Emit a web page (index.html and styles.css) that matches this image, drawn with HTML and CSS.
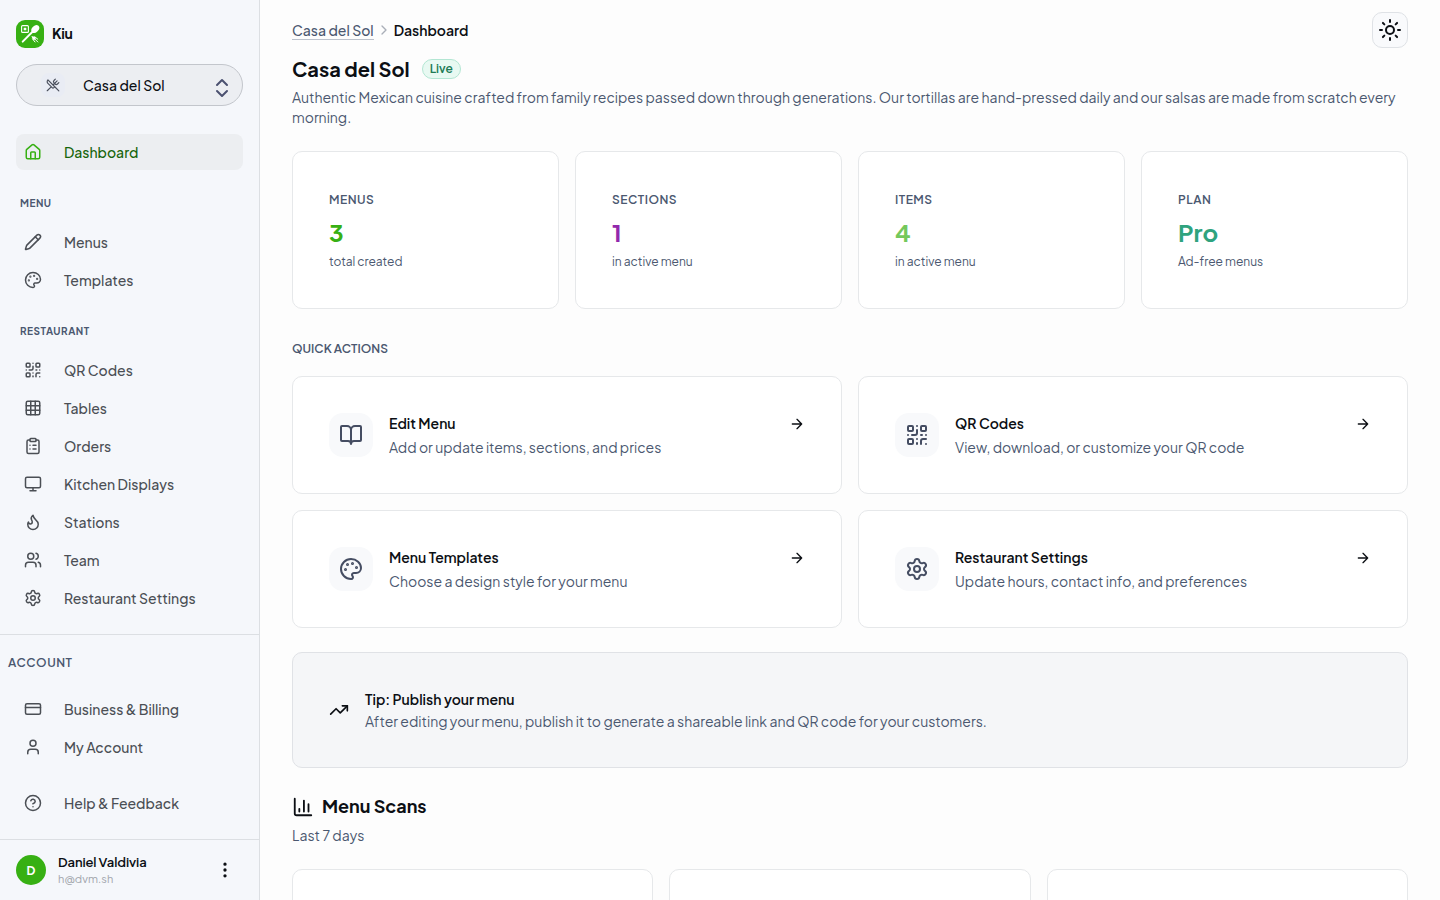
FILE: index.html
```
<!DOCTYPE html>
<html lang="en">
<head>
  <meta charset="UTF-8" />
  <meta name="viewport" content="width=device-width, initial-scale=1.0"/>
  <title>Dashboard - Kiu</title>
  <link rel="stylesheet" href="styles.css">
</head>
<body>
  <!-- Icon sprite -->
  <svg class="sprite" aria-hidden="true">
    <symbol id="i-home" viewBox="0 0 24 24"><path d="M15 21v-8a1 1 0 0 0-1-1h-4a1 1 0 0 0-1 1v8"/><path d="M3 10a2 2 0 0 1 .709-1.528l7-6a2 2 0 0 1 2.582 0l7 6A2 2 0 0 1 21 10v9a2 2 0 0 1-2 2H5a2 2 0 0 1-2-2z"/></symbol>
    <symbol id="i-pencil" viewBox="0 0 24 24"><path d="M21.174 6.812a1 1 0 0 0-3.986-3.987L3.842 16.174a2 2 0 0 0-.5.83l-1.321 4.352a.5.5 0 0 0 .623.622l4.353-1.32a2 2 0 0 0 .83-.497z"/><path d="m15 5 4 4"/></symbol>
    <symbol id="i-palette" viewBox="0 0 24 24"><path d="M12 22a1 1 0 0 1 0-20 10 9 0 0 1 10 9 5 5 0 0 1-5 5h-2.25a1.75 1.75 0 0 0-1.4 2.8l.3.4a1.75 1.75 0 0 1-1.4 2.8z"/><g fill="currentColor"><circle cx="13.5" cy="6.5" r=".5"/><circle cx="17.5" cy="10.5" r=".5"/><circle cx="6.5" cy="12.5" r=".5"/><circle cx="8.5" cy="7.5" r=".5"/></g></symbol>
    <symbol id="i-qr" viewBox="0 0 24 24"><rect width="5" height="5" x="3" y="3" rx="1"/><rect width="5" height="5" x="16" y="3" rx="1"/><rect width="5" height="5" x="3" y="16" rx="1"/><path d="M21 16h-3a2 2 0 0 0-2 2v3M21 21v.01M12 7v3a2 2 0 0 1-2 2H7M3 12h.01M12 3h.01M12 16v.01M16 12h1M21 12v.01M12 21v-1"/></symbol>
    <symbol id="i-grid" viewBox="0 0 24 24"><rect width="18" height="18" x="3" y="3" rx="2"/><path d="M3 9h18M3 15h18M9 3v18M15 3v18"/></symbol>
    <symbol id="i-clipboard" viewBox="0 0 24 24"><rect width="8" height="4" x="8" y="2" rx="1"/><path d="M16 4h2a2 2 0 0 1 2 2v14a2 2 0 0 1-2 2H6a2 2 0 0 1-2-2V6a2 2 0 0 1 2-2h2M12 11h4M12 16h4M8 11h.01M8 16h.01"/></symbol>
    <symbol id="i-monitor" viewBox="0 0 24 24"><rect width="20" height="14" x="2" y="3" rx="2"/><path d="M8 21h8M12 17v4"/></symbol>
    <symbol id="i-flame" viewBox="0 0 24 24"><path d="M8.5 14.5A2.5 2.5 0 0 0 11 12c0-1.38-.5-2-1-3-1.072-2.143-.224-4.054 2-6 .5 2.5 2 4.9 4 6.5 2 1.6 3 3.5 3 5.5a7 7 0 1 1-14 0c0-1.153.433-2.294 1-3a2.5 2.5 0 0 0 2.5 2.5z"/></symbol>
    <symbol id="i-users" viewBox="0 0 24 24"><path d="M16 21v-2a4 4 0 0 0-4-4H6a4 4 0 0 0-4 4v2"/><circle cx="9" cy="7" r="4"/><path d="M22 21v-2a4 4 0 0 0-3-3.87M16 3.13a4 4 0 0 1 0 7.75"/></symbol>
    <symbol id="i-settings" viewBox="0 0 24 24"><path d="M9.671 4.136a2.34 2.34 0 0 1 4.659 0 2.34 2.34 0 0 0 3.319 1.915 2.34 2.34 0 0 1 2.33 4.033 2.34 2.34 0 0 0 0 3.831 2.34 2.34 0 0 1-2.33 4.033 2.34 2.34 0 0 0-3.319 1.915 2.34 2.34 0 0 1-4.659 0 2.34 2.34 0 0 0-3.32-1.915 2.34 2.34 0 0 1-2.33-4.033 2.34 2.34 0 0 0 0-3.831A2.34 2.34 0 0 1 6.35 6.051a2.34 2.34 0 0 0 3.319-1.915"/><circle cx="12" cy="12" r="3"/></symbol>
    <symbol id="i-card" viewBox="0 0 24 24"><rect width="20" height="14" x="2" y="5" rx="2"/><path d="M2 10h20"/></symbol>
    <symbol id="i-user" viewBox="0 0 24 24"><path d="M19 21v-2a4 4 0 0 0-4-4H9a4 4 0 0 0-4 4v2"/><circle cx="12" cy="7" r="4"/></symbol>
    <symbol id="i-help" viewBox="0 0 24 24"><circle cx="12" cy="12" r="10"/><path d="M9.09 9a3 3 0 0 1 5.83 1c0 2-3 3-3 3M12 17h.01"/></symbol>
    <symbol id="i-utensils" viewBox="0 0 24 24"><path d="m16 2-2.3 2.3a3 3 0 0 0 0 4.2l1.8 1.8a3 3 0 0 0 4.2 0L22 8M15 15 3.3 3.3a4.2 4.2 0 0 0 0 6l7.3 7.3c.7.7 2 .7 2.8 0L15 15Zm0 0 7 7M2.1 21.8l6.4-6.3M19 5l-7 7"/></symbol>
    <symbol id="i-updown" viewBox="0 0 24 24"><path d="m7 15 5 5 5-5M7 9l5-5 5 5"/></symbol>
    <symbol id="i-dots" viewBox="0 0 24 24"><circle cx="12" cy="12" r="1"/><circle cx="12" cy="5" r="1"/><circle cx="12" cy="19" r="1"/></symbol>
    <symbol id="i-chevron" viewBox="0 0 24 24"><path d="m9 18 6-6-6-6"/></symbol>
    <symbol id="i-sun" viewBox="0 0 24 24"><circle cx="12" cy="12" r="4"/><path d="M12 2v2M12 20v2M4.93 4.93l1.41 1.41M17.66 17.66l1.41 1.41M2 12h2M20 12h2M6.34 17.66l-1.41 1.41M19.07 4.93l-1.41 1.41"/></symbol>
    <symbol id="i-book" viewBox="0 0 24 24"><path d="M12 7v14M3 18a1 1 0 0 1-1-1V4a1 1 0 0 1 1-1h5a4 4 0 0 1 4 4 4 4 0 0 1 4-4h5a1 1 0 0 1 1 1v13a1 1 0 0 1-1 1h-6a3 3 0 0 0-3 3 3 3 0 0 0-3-3z"/></symbol>
    <symbol id="i-arrow" viewBox="0 0 24 24"><path d="M5 12h14M12 5l7 7-7 7"/></symbol>
    <symbol id="i-trend" viewBox="0 0 24 24"><path d="M16 7h6v6"/><path d="m22 7-8.5 8.5-5-5L2 17"/></symbol>
    <symbol id="i-chart" viewBox="0 0 24 24"><path d="M3 3v16a2 2 0 0 0 2 2h16M18 17V9M13 17V5M8 17v-3"/></symbol>
  </svg>

  <aside class="sidebar">
    <div class="brand">
      <svg class="logo" viewBox="0 0 28 28">
        <rect width="28" height="28" rx="9" fill="#37b013"/>
        <rect x="5.6" y="5.6" width="6.8" height="6.8" rx="1" fill="none" stroke="#fff" stroke-width="1.1"/>
        <rect x="7.7" y="7.7" width="2.6" height="2.6" rx=".4" fill="#fff"/>
        <path d="M6.7 21.6 17.5 10.8" fill="none" stroke="#fff" stroke-width="2" stroke-linecap="round"/>
        <ellipse cx="19.3" cy="9" rx="3.2" ry="4.5" transform="rotate(45 19.3 9)" fill="#fff"/>
        <path d="m15.4 16 1.2 2.9c.6 1.2 1.9 1.2 2.6.5s.7-2-.5-2.6z" fill="#fff"/>
        <path d="m18.6 18.800 3.200 3.200M18.800 16.800l3 2.400M16.600 19l2.400 3" fill="none" stroke="#fff" stroke-width="1" stroke-linecap="round"/>
      </svg>
      <span>Kiu</span>
    </div>

    <button class="switcher">
      <span class="switcher-icon"><svg class="icon"><use href="#i-utensils"/></svg></span>
      <span class="switcher-name">Casa del Sol</span>
      <svg class="icon switcher-arrows"><use href="#i-updown"/></svg>
    </button>

    <nav class="nav">
      <a class="nav-link active" href="#"><svg class="icon"><use href="#i-home"/></svg>Dashboard</a>
      <h2 class="nav-title">MENU</h2>
      <a class="nav-link" href="#"><svg class="icon"><use href="#i-pencil"/></svg>Menus</a>
      <a class="nav-link" href="#"><svg class="icon"><use href="#i-palette"/></svg>Templates</a>
      <h2 class="nav-title">RESTAURANT</h2>
      <a class="nav-link" href="#"><svg class="icon"><use href="#i-qr"/></svg>QR Codes</a>
      <a class="nav-link" href="#"><svg class="icon"><use href="#i-grid"/></svg>Tables</a>
      <a class="nav-link" href="#"><svg class="icon"><use href="#i-clipboard"/></svg>Orders</a>
      <a class="nav-link" href="#"><svg class="icon"><use href="#i-monitor"/></svg>Kitchen Displays</a>
      <a class="nav-link" href="#"><svg class="icon"><use href="#i-flame"/></svg>Stations</a>
      <a class="nav-link" href="#"><svg class="icon"><use href="#i-users"/></svg>Team</a>
      <a class="nav-link" href="#"><svg class="icon"><use href="#i-settings"/></svg>Restaurant Settings</a>
    </nav>

    <div class="account">
      <h2 class="account-title">ACCOUNT</h2>
      <div class="nav">
        <a class="nav-link" href="#"><svg class="icon"><use href="#i-card"/></svg>Business &amp; Billing</a>
        <a class="nav-link" href="#"><svg class="icon"><use href="#i-user"/></svg>My Account</a>
        <a class="nav-link help" href="#"><svg class="icon"><use href="#i-help"/></svg>Help &amp; Feedback</a>
      </div>
    </div>

    <div class="user">
      <span class="avatar">D</span>
      <div class="user-info">
        <strong>Daniel Valdivia</strong>
        <small>h@dvm.sh</small>
      </div>
      <svg class="icon user-menu"><use href="#i-dots"/></svg>
    </div>
  </aside>

  <main class="main">
    <div class="topbar">
      <div class="breadcrumb">
        <a href="#">Casa del Sol</a>
        <svg class="icon"><use href="#i-chevron"/></svg>
        <span>Dashboard</span>
      </div>
      <button class="theme-btn"><svg class="icon"><use href="#i-sun"/></svg></button>
    </div>

    <div class="title-row">
      <h1>Casa del Sol</h1>
      <span class="badge">Live</span>
    </div>
    <p class="description">Authentic Mexican cuisine crafted from family recipes passed down through generations. Our tortillas are hand-pressed daily and our salsas are made from scratch every morning.</p>

    <section class="stats">
      <div class="card stat">
        <h3>MENUS</h3>
        <strong class="green">3</strong>
        <small>total created</small>
      </div>
      <div class="card stat">
        <h3>SECTIONS</h3>
        <strong class="purple">1</strong>
        <small>in active menu</small>
      </div>
      <div class="card stat">
        <h3>ITEMS</h3>
        <strong class="lime">4</strong>
        <small>in active menu</small>
      </div>
      <div class="card stat">
        <h3>PLAN</h3>
        <strong class="teal">Pro</strong>
        <small>Ad-free menus</small>
      </div>
    </section>

    <h2 class="section-title">QUICK ACTIONS</h2>
    <section class="actions">
      <a class="card action" href="#">
        <span class="tile"><svg class="icon"><use href="#i-book"/></svg></span>
        <div class="action-text">
          <h3>Edit Menu</h3>
          <p>Add or update items, sections, and prices</p>
        </div>
        <svg class="icon arrow"><use href="#i-arrow"/></svg>
      </a>
      <a class="card action" href="#">
        <span class="tile"><svg class="icon"><use href="#i-qr"/></svg></span>
        <div class="action-text">
          <h3>QR Codes</h3>
          <p>View, download, or customize your QR code</p>
        </div>
        <svg class="icon arrow"><use href="#i-arrow"/></svg>
      </a>
      <a class="card action" href="#">
        <span class="tile"><svg class="icon"><use href="#i-palette"/></svg></span>
        <div class="action-text">
          <h3>Menu Templates</h3>
          <p>Choose a design style for your menu</p>
        </div>
        <svg class="icon arrow"><use href="#i-arrow"/></svg>
      </a>
      <a class="card action" href="#">
        <span class="tile"><svg class="icon"><use href="#i-settings"/></svg></span>
        <div class="action-text">
          <h3>Restaurant Settings</h3>
          <p>Update hours, contact info, and preferences</p>
        </div>
        <svg class="icon arrow"><use href="#i-arrow"/></svg>
      </a>
    </section>

    <section class="card tip">
      <svg class="icon"><use href="#i-trend"/></svg>
      <div>
        <h3>Tip: Publish your menu</h3>
        <p>After editing your menu, publish it to generate a shareable link and QR code for your customers.</p>
      </div>
    </section>

    <h2 class="scans-title"><svg class="icon"><use href="#i-chart"/></svg><span>Menu Scans</span></h2>
    <p class="scans-range">Last 7 days</p>
    <section class="scans">
      <div class="card"></div>
      <div class="card"></div>
      <div class="card"></div>
    </section>
  </main>
</body>
</html>
```
FILE: styles.css
```
:root {
  --bg: #fdfdfd;
  --sidebar: #f5f7fb;
  --card: #ffffff;
  --border: #e6e8ea;
  --line: #dcdfe3;
  --text: #0c0f14;
  --muted: #4b5870;
  --nav: #4b4f55;
  --green: #37b013;
}

* {
  margin: 0;
  padding: 0;
  box-sizing: border-box;
}

body {
  font-family: 'Plus Jakarta Sans', Inter, sans-serif;
  font-size: 14px;
  background-color: var(--bg);
  color: var(--text);
  display: flex;
  height: 100vh;
  overflow: hidden;
}

a {
  color: inherit;
  text-decoration: none;
}

button {
  font: inherit;
  color: inherit;
}

.sprite {
  display: none;
}

.icon {
  flex: none;
  width: 18px;
  height: 18px;
  fill: none;
  stroke: currentColor;
  stroke-width: 2;
  stroke-linecap: round;
  stroke-linejoin: round;
}

/* Sidebar */
.sidebar {
  flex: none;
  width: 260px;
  background-color: var(--sidebar);
  border-right: 1px solid var(--line);
  display: flex;
  flex-direction: column;
}

.brand {
  display: flex;
  align-items: center;
  gap: 8px;
  height: 28px;
  margin: 20px 16px 16px;
  font-weight: 700;
  line-height: 26px;
  letter-spacing: -0.28px;
}

.brand span {
  height: 28px;
}

.logo {
  width: 28px;
  height: 28px;
}

.switcher {
  display: flex;
  align-items: center;
  height: 42px;
  margin: 0 16px 28px;
  padding: 0 8px 0 24px;
  background-color: #eceef2;
  border: 1px solid #c3c6cc;
  border-radius: 21px;
  font-weight: 500;
}

.switcher-icon {
  display: grid;
  place-items: center;
  width: 24px;
  height: 24px;
  border-radius: 8px;
  background-color: #e9ecf4;
  color: #4a4f5c;
}

.switcher-icon .icon {
  width: 14px;
  height: 14px;
}

.switcher-name {
  flex: 1;
  margin-left: 18px;
  text-align: left;
}

.switcher-arrows {
  width: 24px;
  height: 24px;
  margin-top: 5px;
  color: #4b5170;
}

.nav {
  display: flex;
  flex-direction: column;
  gap: 2px;
  padding: 0 16px;
}

.nav-link {
  display: flex;
  align-items: center;
  gap: 22px;
  height: 36px;
  padding: 0 8px;
  border-radius: 8px;
  color: var(--nav);
  font-weight: 500;
}

.nav-link.active {
  background-color: #eceef1;
  color: #17650b;
}

.nav-link.active .icon {
  color: var(--green);
}

.nav-title {
  height: 18px;
  margin: 22px 4px 10px;
  font-size: 10px;
  line-height: 19px;
  font-weight: 700;
  letter-spacing: 0.5px;
  color: var(--muted);
}

.account {
  margin-top: 18px;
  border-top: 1px solid var(--line);
}

.account-title {
  padding: 18px 8px;
  font-size: 12px;
  line-height: 20px;
  font-weight: 600;
  letter-spacing: 0.5px;
  color: var(--muted);
}

.help {
  margin-top: 18px;
}

.user {
  flex: 1;
  display: flex;
  align-items: center;
  gap: 12px;
  margin-top: 18px;
  padding: 0 24px 0 16px;
  border-top: 1px solid var(--line);
}

.avatar {
  display: grid;
  place-items: center;
  width: 30px;
  height: 30px;
  border-radius: 50%;
  background-color: var(--green);
  color: #fff;
  font-size: 12px;
  font-weight: 700;
}

.user-info {
  flex: 1;
  display: flex;
  flex-direction: column;
}

.user-info strong {
  font-size: 13px;
  line-height: 18px;
  font-weight: 600;
  letter-spacing: -0.1px;
}

.user-info small {
  font-size: 11px;
  line-height: 16px;
  letter-spacing: 0.1px;
  color: #a1a5ac;
}

.user-menu {
  width: 20px;
  height: 20px;
  fill: currentColor;
}

/* Main */
.main {
  flex: 1;
  padding: 12px 32px 0;
  overflow: hidden;
}

.topbar {
  display: flex;
  justify-content: space-between;
  align-items: center;
  height: 36px;
}

.breadcrumb {
  display: flex;
  align-items: center;
  gap: 2px;
  line-height: 18px;
}

.breadcrumb a {
  padding-top: 1px;
  border-bottom: 1px solid #bcc2cc;
  color: var(--muted);
  font-weight: 500;
}

.breadcrumb .icon {
  width: 16px;
  height: 16px;
  color: #a9aeb8;
}

.breadcrumb span {
  font-weight: 600;
}

.theme-btn {
  display: grid;
  place-items: center;
  width: 36px;
  height: 36px;
  background-color: #f9fafc;
  border: 1px solid #dfe2e6;
  border-radius: 10px;
}

.theme-btn .icon {
  width: 24px;
  height: 24px;
}

.title-row {
  display: flex;
  align-items: center;
  gap: 12px;
  height: 28px;
  margin-top: 7px;
}

.title-row h1 {
  padding-bottom: 2px;
  font-size: 20px;
  font-weight: 700;
}

.badge {
  height: 20px;
  padding: 0 7px;
  border: 1px solid #b3e6d3;
  border-radius: 10px;
  background-color: #e8f9f2;
  color: #207a55;
  font-size: 12px;
  line-height: 18px;
  font-weight: 600;
}

.description {
  margin: 4px 0 24px;
  line-height: 20px;
  color: var(--muted);
}

.card {
  background-color: var(--card);
  border: 1px solid var(--border);
  border-radius: 10px;
}

.stats {
  display: grid;
  grid-template-columns: repeat(4, 1fr);
  gap: 16px;
}

.stat {
  display: flex;
  flex-direction: column;
  height: 158px;
  padding: 37px 36px 0;
}

.stat h3 {
  font-size: 12px;
  line-height: 22px;
  font-weight: 600;
  letter-spacing: 0.5px;
  color: var(--muted);
}

.stat strong {
  margin: 5px 0 4px;
  font-size: 24px;
  line-height: 32px;
  font-weight: 700;
}

.stat small {
  font-size: 12px;
  line-height: 20px;
  color: var(--muted);
}

.green { color: var(--green); }
.purple { color: #9228ac; }
.lime { color: #74c85c; }
.teal { color: #2fa37e; }

.section-title {
  margin: 30px 0 18px;
  font-size: 12px;
  line-height: 19px;
  font-weight: 600;
  color: var(--muted);
}

.actions {
  display: grid;
  grid-template-columns: repeat(2, 1fr);
  gap: 16px;
}

.action {
  display: flex;
  align-items: flex-start;
  gap: 16px;
  height: 118px;
  padding: 36px;
}

.tile {
  display: grid;
  place-items: center;
  width: 44px;
  height: 44px;
  border-radius: 14px;
  background-color: #f8f9fb;
  color: #454d62;
}

.tile .icon {
  width: 24px;
  height: 24px;
}

.action-text {
  flex: 1;
}

.action h3,
.tip h3 {
  font-size: 14px;
  line-height: 22px;
  font-weight: 600;
}

.action h3 {
  line-height: 21px;
}

.action p {
  margin-top: 3px;
  line-height: 20px;
  color: var(--muted);
}

.arrow {
  width: 16px;
  height: 16px;
  margin-top: 3px;
}

.tip {
  display: flex;
  align-items: center;
  gap: 16px;
  height: 116px;
  margin-top: 24px;
  padding: 0 36px;
  background-color: #f5f6f8;
  border-color: #e0e2e6;
}

.tip .icon {
  width: 20px;
  height: 20px;
}

.tip p {
  line-height: 22px;
  color: var(--muted);
}

.scans-title {
  display: flex;
  align-items: center;
  gap: 8px;
  height: 28px;
  margin-top: 24px;
  font-size: 18px;
  font-weight: 700;
}

.scans-title span {
  padding-bottom: 2px;
}

.scans-title .icon {
  width: 22px;
  height: 22px;
  margin-top: 2px;
}

.scans-range {
  margin: 5px 0 24px;
  line-height: 20px;
  color: var(--muted);
}

.scans {
  display: grid;
  grid-template-columns: repeat(3, 1fr);
  gap: 16px;
}

.scans .card {
  height: 140px;
}
```
